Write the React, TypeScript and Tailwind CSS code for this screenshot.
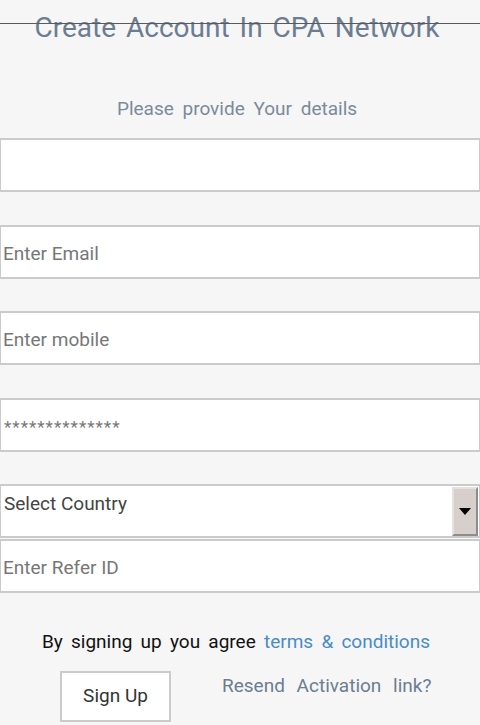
import React from 'react';

const font = { fontFamily: 'Roboto, "Noto Sans", sans-serif' };

const Field = ({ placeholder, className = '' }: { placeholder?: string; className?: string }) => (
    <div className={`h-[54px] w-[480px] bg-white border-y-2 border-x border-[#cbcbcb] flex items-center px-[2px] ${className}`}>
        <span className="text-[19px] text-[#777] leading-none pt-[3px]">{placeholder}</span>
    </div>
);

const App = () => {
    return (
        <div className="relative w-[480px] h-[725px] bg-[#f6f6f6] overflow-hidden" style={font}>
            <div className="absolute left-0 right-0 top-[23px] h-px bg-[#5a5a5a]" />

            <h1 className="pt-[10px] pr-[6px] text-center text-[28px] leading-[36px] text-[#6b7d91] [word-spacing:3px]">
                Create Account In CPA Network
            </h1>

            <p className="mt-[51px] pr-[6px] text-center text-[19px] leading-[24px] text-[#7b8a9c] [word-spacing:4px]">
                Please provide Your details
            </p>

            <div className="mt-[17px] flex flex-col">
                <Field />
                <Field placeholder="Enter Email" className="mt-[33px]" />
                <Field placeholder="Enter mobile" className="mt-[32px]" />
                <div className="mt-[33px] h-[54px] w-[480px] bg-white border-y-2 border-x border-[#cbcbcb] flex items-center px-[3px]">
                    <span className="text-[17px] text-[#777] tracking-[1px] pt-[6px]">**************</span>
                </div>
                <div className="mt-[32px] h-[54px] w-[480px] bg-white border-y-2 border-x border-[#cbcbcb] flex">
                    <span className="flex-1 pl-[3px] pt-[4px] text-[19px] text-[#444]">Select Country</span>
                    <div className="mt-[1px] mr-px h-[49px] w-[26px] bg-[#d6cfcc] border-l-2 border-t-2 border-l-[#e6e1df] border-t-[#e6e1df] border-r-2 border-b-2 border-r-[#8c8c8c] border-b-[#8c8c8c] flex items-center justify-center">
                        <svg width="12" height="8" viewBox="0 0 12 8">
                            <polygon points="0,0 12,0 6,7" fill="#000" />
                        </svg>
                    </div>
                </div>
                <Field placeholder="Enter Refer ID" className="mt-[1px]" />
            </div>

            <p className="mt-[37px] text-center text-[19px] leading-[24px] text-[#111] [word-spacing:3.5px] pr-[8px]">
                By signing up you agree <span className="text-[#4a8bc9]">terms &amp; conditions</span>
            </p>

            <div className="mt-[17px] flex items-start">
                <button className="ml-[60px] h-[51px] w-[111px] bg-white border-2 border-[#cbcbcb] text-[19px] text-[#333]">
                    Sign Up
                </button>
                <span className="ml-[51px] mt-[3px] text-[19px] leading-[24px] text-[#6b7d91] [word-spacing:7px]">
                    Resend Activation link?
                </span>
            </div>
        </div>
    );
};

export default App;
